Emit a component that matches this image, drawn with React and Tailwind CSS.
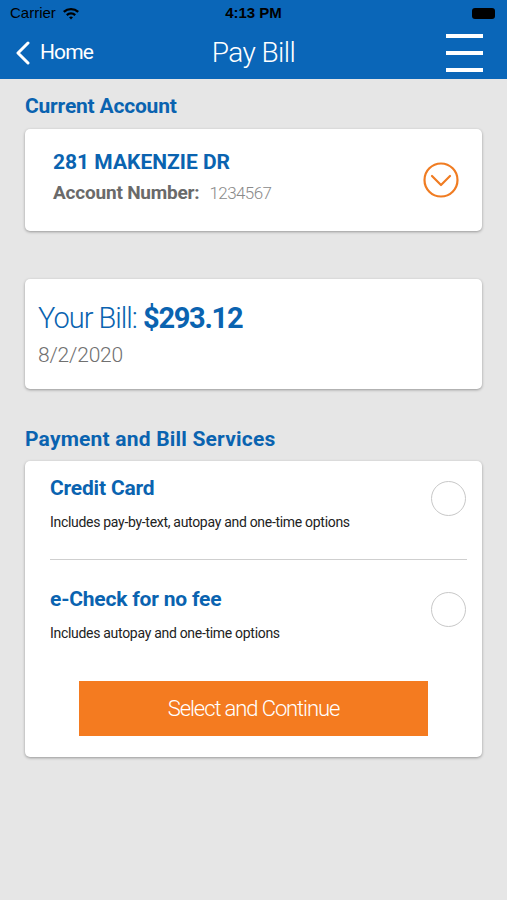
import React from "react";

const font = { fontFamily: '"Roboto", "Liberation Sans", sans-serif' };

const StatusBar = () => (
  <div className="h-[26px] flex items-center justify-between px-[10px] text-black text-[15px]" style={{ fontFamily: '"Liberation Sans", sans-serif' }}>
    <div className="flex items-center gap-[6px] w-[120px]">
      <span>Carrier</span>
      <svg width="18" height="14" viewBox="0 0 18 14">
        <path d="M1 5a12 12 0 0 1 16 0l-1.6 1.7a9.6 9.6 0 0 0-12.8 0z" fill="#000" />
        <path d="M4 8.2a7.5 7.5 0 0 1 10 0l-1.6 1.7a5.2 5.2 0 0 0-6.8 0z" fill="#000" />
        <path d="M7 11.3a3 3 0 0 1 4 0L9 13.5z" fill="#000" />
      </svg>
    </div>
    <span className="font-bold text-[15px]">4:13 PM</span>
    <div className="w-[120px] flex justify-end">
      <div className="w-[23px] h-[11px] rounded-[3px] bg-black mr-[2px]" />
    </div>
  </div>
);

const NavBar = () => (
  <div className="h-[53px] grid grid-cols-[1fr_auto_1fr] items-center pl-[16px] pr-[24px] text-white">
    <div className="flex items-center gap-[10px]">
      <svg width="14" height="24" viewBox="0 0 14 24" fill="none" stroke="#fff" strokeWidth="3" strokeLinecap="round" strokeLinejoin="round">
        <path d="M12 2 2 12l10 10" />
      </svg>
      <span className="text-[21px] leading-none tracking-[-0.9px]">Home</span>
    </div>
    <span className="text-[28px] leading-none tracking-[-0.6px] font-light pl-[8px]">Pay Bill</span>
    <div className="flex justify-end">
      <div className="flex flex-col gap-[13px]">
        <div className="w-[37px] h-[4px] bg-white" />
        <div className="w-[37px] h-[4px] bg-white" />
        <div className="w-[37px] h-[4px] bg-white" />
      </div>
    </div>
  </div>
);

const Card = ({ className = "", children }) => (
  <div className={`bg-white rounded-[5px] shadow-[0_1px_3px_rgba(0,0,0,0.35)] ${className}`}>{children}</div>
);

const Radio = () => <div className="w-[35px] h-[35px] rounded-full border border-[#c8c8c8] shrink-0" />;

const PaymentOption = ({ title, desc }) => (
  <div className="flex justify-between items-start">
    <div>
      <div className="text-[21px] font-bold text-[#0a63b0] leading-[26px] tracking-[-0.2px]">{title}</div>
      <div className="text-[14px] text-[#222] mt-[12px] leading-[18px] tracking-[-0.3px]">{desc}</div>
    </div>
    <div className="mt-[6px]">
      <Radio />
    </div>
  </div>
);

export default function App() {
  return (
    <div className="w-[507px] h-[900px] bg-[#e6e6e6]" style={font}>
      <div className="bg-[#0a66b8]">
        <StatusBar />
        <NavBar />
      </div>

      <div className="px-[25px]">
        <h2 className="text-[21px] font-bold text-[#0a63b0] pt-[14px] pb-[10px] leading-[26px] tracking-[-0.2px]">Current Account</h2>

        <Card className="h-[102px] flex items-center justify-between pl-[28px] pr-[22px]">
          <div className="pb-[4px]">
            <div className="text-[21px] font-bold text-[#0a63b0] leading-[26px]">281 MAKENZIE DR</div>
            <div className="mt-[4px] flex items-baseline gap-[10px]">
              <span className="text-[19px] font-bold text-[#6a6a6a] tracking-[-0.2px]">Account Number:</span>
              <span className="text-[17px] text-[#8a8a8a] font-light tracking-[-0.6px]">1234567</span>
            </div>
          </div>
          <svg width="38" height="38" viewBox="0 0 38 38" fill="none" stroke="#f07c22" strokeWidth="2.2" strokeLinecap="round" strokeLinejoin="round">
            <circle cx="19" cy="19" r="16.5" />
            <path d="M10 15l9 9 9-9" />
          </svg>
        </Card>

        <Card className="mt-[48px] h-[110px] flex flex-col justify-center pl-[13px]">
          <div className="text-[29px] text-[#0a63b0] leading-[34px] tracking-[-1px]">
            <span className="font-light">Your Bill:</span> <span className="font-bold tracking-[-1.3px]">$293.12</span>
          </div>
          <div className="text-[21px] text-[#707070] mt-[8px] leading-[24px] font-light tracking-[-0.2px]">8/2/2020</div>
        </Card>

        <h2 className="text-[21px] font-bold text-[#0a63b0] pt-[37px] pb-[9px] leading-[26px] tracking-[0.2px]">Payment and Bill Services</h2>

        <Card className="pl-[25px] pr-[16px] pt-[14px] pb-[21px]">
          <PaymentOption title="Credit Card" desc="Includes pay-by-text, autopay and one-time options" />
          <div className="h-px bg-[#cfcfcf] mt-[28px] mb-[26px] mr-[-1px]" />
          <PaymentOption title="e-Check for no fee" desc="Includes autopay and one-time options" />
          <div className="flex justify-center mt-[39px] pr-[9px]">
            <button className="w-[349px] h-[55px] bg-[#f47b20] text-white text-[22px] font-light tracking-[-1.1px]">Select and Continue</button>
          </div>
        </Card>
      </div>
    </div>
  );
}
